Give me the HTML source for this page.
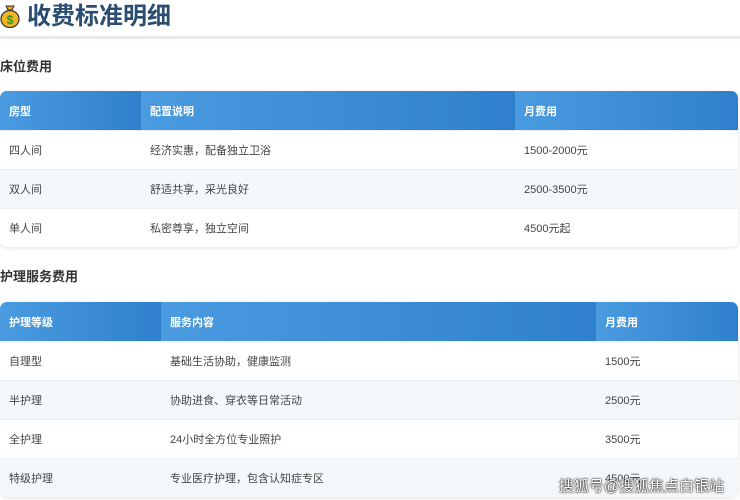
<!DOCTYPE html>
<html><head><meta charset="utf-8"><style>
body{margin:0;width:740px;height:500px;overflow:hidden;background:#fff;font-family:"Liberation Sans","Noto Sans CJK SC",sans-serif;}
.title{position:absolute;left:0;top:0;height:36px;width:740px;border-bottom:3px solid #e6e9ee;}
.title .ic{position:absolute;left:0;top:4px;width:20px;height:24px;}
.title span{position:absolute;left:27px;top:2px;font-size:24px;font-weight:bold;color:#2b4d72;line-height:30px;}
h3{position:absolute;left:0;margin:0;font-size:13px;font-weight:bold;color:#333;}
table{position:absolute;left:0;width:738px;border-collapse:collapse;border-radius:7px;overflow:hidden;box-shadow:0 1px 4px rgba(0,0,0,.12);font-size:11px;color:#444;}
th{background:linear-gradient(90deg,#4a9be0,#2f80cc);color:#fff;text-align:left;font-weight:bold;padding:0 0 0 9px;height:39px;}
td{padding:0 0 0 9px;height:38px;border-top:1px solid #eef1f4;}
tr:nth-child(odd) td{background:#f5f8fb;}
.wm{position:absolute;right:16px;top:475px;font-size:15px;color:#fff;text-shadow:0 0 2px #000,0 0 1px #000;}
</style></head><body>
<div class="title">
<svg class="ic" viewBox="0 0 20 24"><path d="M6 2h8l-2 4h-4z" fill="#e8a21c" stroke="#333" stroke-width="1"/><ellipse cx="10" cy="15" rx="9" ry="8.5" fill="#f2b625" stroke="#333" stroke-width="1.2"/><text x="10" y="20" font-size="12" font-weight="bold" text-anchor="middle" fill="#2a9a2a" font-family="Liberation Sans">$</text></svg>
<span>收费标准明细</span></div>
<h3 style="top:56px">床位费用</h3>
<table style="top:91px">
<tr><th style="width:132px">房型</th><th style="width:365px">配置说明</th><th>月费用</th></tr>
<tr><td>四人间</td><td>经济实惠，配备独立卫浴</td><td>1500-2000元</td></tr>
<tr><td>双人间</td><td>舒适共享，采光良好</td><td>2500-3500元</td></tr>
<tr><td>单人间</td><td>私密尊享，独立空间</td><td>4500元起</td></tr>
</table>
<h3 style="top:266px">护理服务费用</h3>
<table style="top:302px">
<tr><th style="width:152px">护理等级</th><th style="width:426px">服务内容</th><th>月费用</th></tr>
<tr><td>自理型</td><td>基础生活协助，健康监测</td><td>1500元</td></tr>
<tr><td>半护理</td><td>协助进食、穿衣等日常活动</td><td>2500元</td></tr>
<tr><td>全护理</td><td>24小时全方位专业照护</td><td>3500元</td></tr>
<tr><td>特级护理</td><td>专业医疗护理，包含认知症专区</td><td>4500元</td></tr>
</table>
<div class="wm">搜狐号@搜狐焦点白银站</div>
</body></html>
